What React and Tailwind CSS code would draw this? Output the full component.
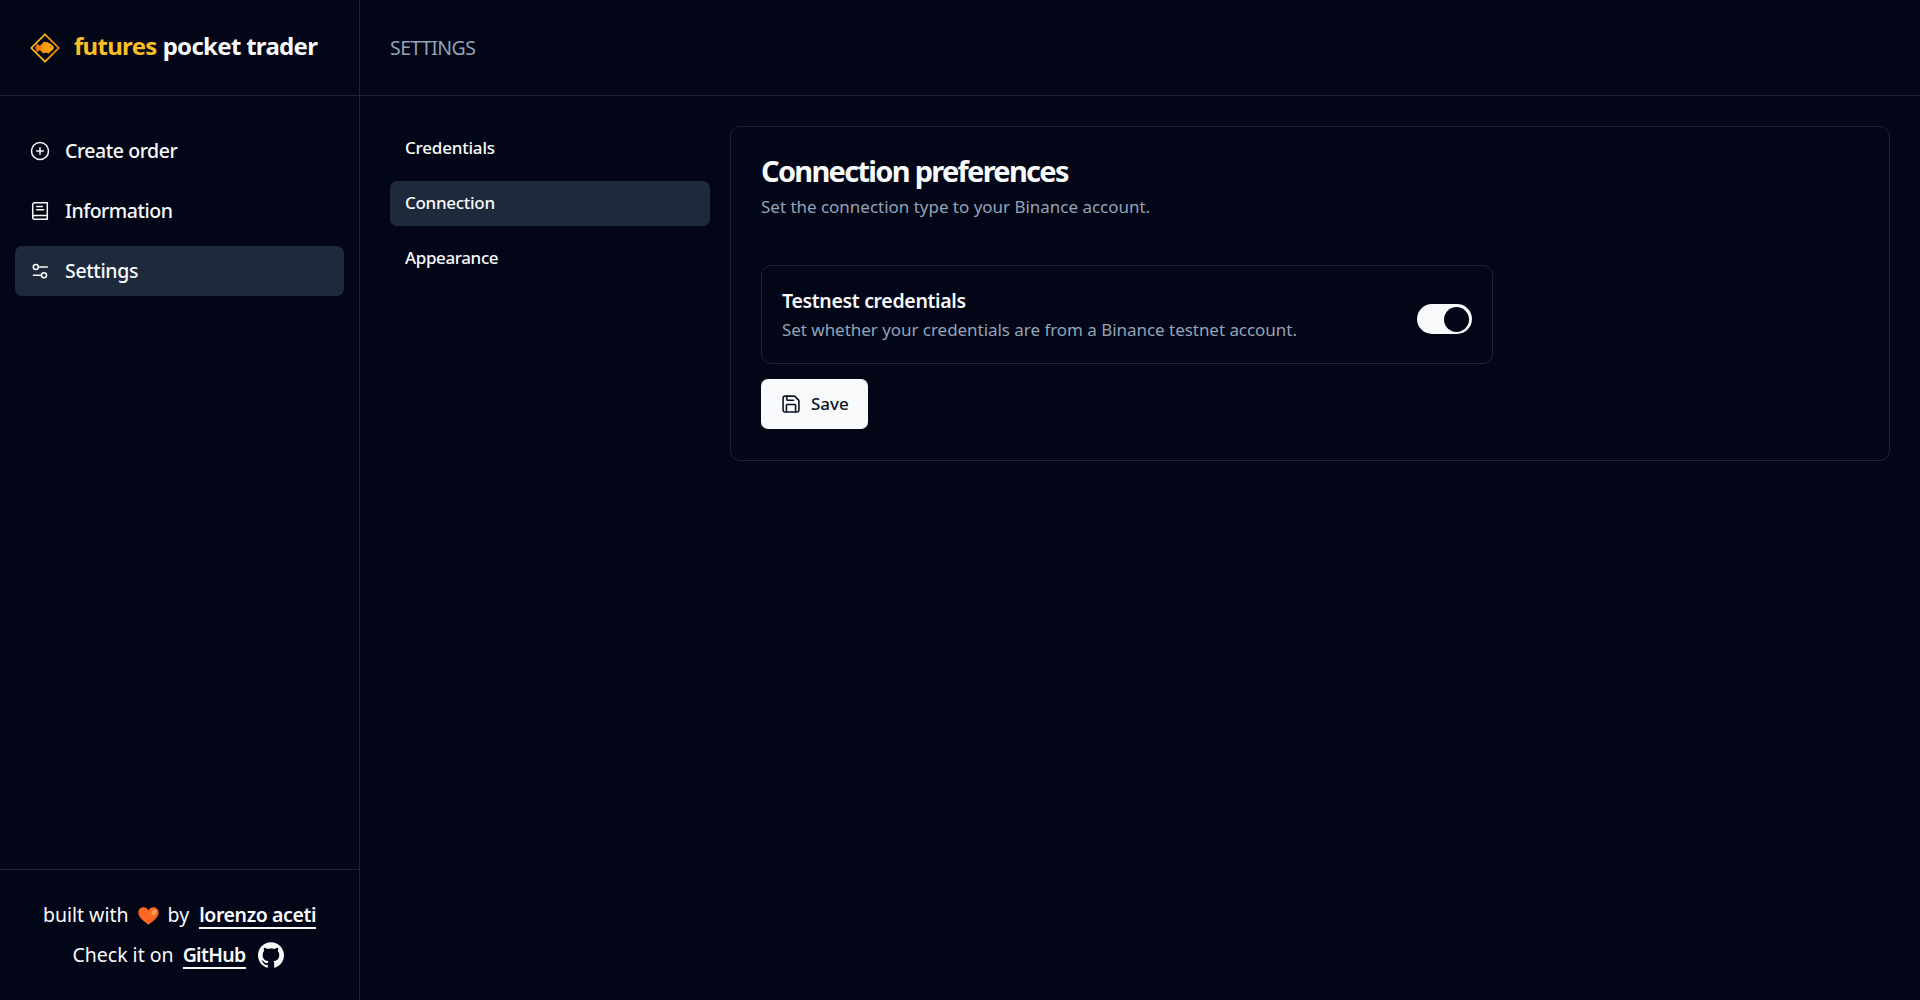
import React, { useState } from "react";
import { SiGithub } from "react-icons/si";

function Logo() {
  return (
    <svg className="size-[30px] shrink-0" viewBox="0 0 30 30" fill="none">
      <defs>
        <linearGradient id="frame" x1="0" y1="15" x2="30" y2="15" gradientUnits="userSpaceOnUse">
          <stop stopColor="#fcc60a" />
          <stop offset="1" stopColor="#f08a0c" />
        </linearGradient>
        <linearGradient id="fish" x1="6" y1="15" x2="24" y2="15" gradientUnits="userSpaceOnUse">
          <stop stopColor="#f26a12" />
          <stop offset="0.45" stopColor="#fb9a0c" />
          <stop offset="1" stopColor="#fdae08" />
        </linearGradient>
      </defs>
      <path d="M15 1.3 28.7 15 15 28.7 1.3 15Z" stroke="url(#frame)" strokeWidth="1.7" />
      <path
        d="M6 10.8c1.8.2 3.200 1 4 2.200 1-1.300 1.800-2 2.600-2.400l.2-1.200c2.200-.7 4.700-.5 6.400.9 2.200.9 3.900 2.500 4.900 4.500-.9 1.900-2.400 3.300-4.300 4.200l-1 1.600-2-.9-2.300.1-1.300 1-.9-1.600c-1-.5-1.800-1.200-2.500-2.100-.9 1.100-2 1.800-3.600 2 .3-1.400.2-2.300-.6-3l-.9-1.300 1.100-1c.700-.9.800-1.800.2-3Z"
        fill="url(#fish)"
      />
      <circle cx="20.500" cy="13.800" r="0.700" fill="#7a3a05" />
    </svg>
  );
}

function Heart() {
  return (
    <svg className="h-[18px] w-[21px]" viewBox="0 0 21 18">
      <path d="M10.500 17.800C7 15 .4 10.800.4 5.600.4 2.500 2.700.3 5.500.3c2.100 0 4 1.100 5 3 1-1.900 2.900-3 5-3 2.800 0 5.100 2.200 5.100 5.300 0 5.200-6.600 9.400-10.100 12.200Z" fill="#ff6723" />
      <path d="M2.600 9.600C3.800 13 7.600 15.400 10.500 17.800 7 15 .4 10.800.4 5.600.4 3.800 1.200 2.200 2.400 1.300 1.200 4 1.500 6.900 2.600 9.600Z" fill="#e2501c" />
      <ellipse cx="16" cy="5.400" rx="2.100" ry="3.300" transform="rotate(28 16 5.400)" fill="#ffa05c" />
    </svg>
  );
}

const stroke = { fill: "none", stroke: "currentColor", strokeWidth: 1.5, strokeLinecap: "round", strokeLinejoin: "round" };

function PlusCircle() {
  return (
    <svg className="size-5" viewBox="0 0 20 20" {...stroke}>
      <circle cx="10" cy="10" r="8.500" />
      <path d="M6.700 10h6.600M10 6.700v6.600" />
    </svg>
  );
}

function Book() {
  return (
    <svg className="size-5" viewBox="0 0 20 20" {...stroke}>
      <path d="M17.300 14.400V1.700H4.700a2 2 0 0 0-2 2v12.600a2 2 0 0 0 2 2h12.600v-3.900H4.700a2 2 0 0 0-2 1.900" />
      <path d="M6.700 5.600h5.700M6.700 8.700h7" />
    </svg>
  );
}

function Sliders() {
  return (
    <svg className="size-5" viewBox="0 0 20 20" {...stroke}>
      <circle cx="5.800" cy="5.900" r="2.500" />
      <path d="M8.500 5.900h8.800M11.500 14.200H3.400" />
      <circle cx="14" cy="14.200" r="2.500" />
    </svg>
  );
}

function Floppy() {
  return (
    <svg className="size-5" viewBox="0 0 24 24" fill="none" stroke="currentColor" strokeWidth="1.900" strokeLinecap="round" strokeLinejoin="round">
      <path d="M15.500 2.500a2 2 0 0 1 1.400.6l4 4a2 2 0 0 1 .6 1.400V19.500a2 2 0 0 1-2 2h-15a2 2 0 0 1-2-2v-15a2 2 0 0 1 2-2z" />
      <path d="M17.500 21.500v-8a1 1 0 0 0-1-1h-9a1 1 0 0 0-1 1v8M7 2.500v4a1 1 0 0 0 1 1h7" />
    </svg>
  );
}

const mainLinks = [
  { label: "Create order", icon: PlusCircle, tracking: "tracking-[-0.45px]" },
  { label: "Information", icon: Book, tracking: "tracking-[-0.48px]" },
  { label: "Settings", icon: Sliders, tracking: "tracking-[-0.35px]" },
];

const tabs = [
  { label: "Credentials", tracking: "tracking-[-0.2px]" },
  { label: "Connection", tracking: "tracking-[-0.3px]" },
  { label: "Appearance", tracking: "tracking-[-0.38px]" },
];

export default function App() {
  const [page, setPage] = useState("Settings");
  const [tab, setTab] = useState("Connection");
  const [testnet, setTestnet] = useState(true);

  return (
    <div className="flex h-screen overflow-hidden bg-[#020617] font-['Noto_Sans',sans-serif] text-[#f8fafc]">
      <aside className="flex w-[360px] shrink-0 flex-col border-r border-[#1e2435]">
        <div className="flex h-24 shrink-0 items-center border-b border-[#1e2435] pl-[30px]">
          <Logo />
          <h1 className="-mt-[4px] ml-[14px] flex gap-[6px] text-[24px] font-bold whitespace-nowrap">
            <span className="tracking-[-0.7px] text-[#fbbf24]">futures</span>
            <span className="tracking-[-0.7px]">pocket trader</span>
          </h1>
        </div>
        <nav className="flex flex-1 flex-col gap-[10px] py-[30px] pr-[15px] pl-[15px]">
          {mainLinks.map(({ label, icon: Icon, tracking }) => (
            <button
              key={label}
              onClick={() => setPage(label)}
              className={`flex h-[50px] items-center gap-[15px] rounded-[7px] pl-[15px] text-left ${page === label ? "bg-[#1e293b]" : ""}`}
            >
              <Icon />
              <span className={`text-[19.5px] font-medium ${tracking}`}>{label}</span>
            </button>
          ))}
        </nav>
        <footer className="flex h-[131px] shrink-0 flex-col items-center border-t border-[#1e2435] pt-[30px] text-[19.5px]">
          <div className="flex h-[30px] items-start">
            <span className="leading-[30px]">built with</span>
            <span className="mr-[9px] ml-[9px] mt-[7px]"><Heart /></span>
            <span className="leading-[30px]">by</span>
            <span className="ml-[10px] h-[29px] border-b-2 border-[#f8fafc] leading-[30px] font-semibold tracking-[-0.39px]">lorenzo aceti</span>
          </div>
          <div className="mt-[10px] flex h-[30px] items-start pr-[3px]">
            <span className="leading-[30px]">Check it on</span>
            <span className="ml-[9px] h-[29px] border-b-2 border-[#f8fafc] leading-[30px] font-semibold tracking-[-0.67px]">GitHub</span>
            <SiGithub className="mt-[2px] ml-[12px] size-[26px]" />
          </div>
        </footer>
      </aside>

      <div className="flex min-w-0 flex-1 flex-col">
        <header className="flex h-24 shrink-0 items-center border-b border-[#1e2435] pl-[30px]">
          <span className="text-[19.5px] tracking-[-0.58px] text-[#94a3b8]">SETTINGS</span>
        </header>
        <main className="flex items-start gap-5 p-[30px]">
          <nav className="flex w-80 shrink-0 flex-col gap-[10px]">
            {tabs.map(({ label, tracking }) => (
              <button
                key={label}
                onClick={() => setTab(label)}
                className={`flex h-[45px] items-center rounded-[7px] px-[15px] pb-[2px] text-left text-[17px] font-medium ${tracking} ${tab === label ? "bg-[#1e293b]" : ""}`}
              >
                {label}
              </button>
            ))}
          </nav>
          <section className="h-[335px] flex-1 rounded-[10px] border border-[#1e2435] px-[30px] pt-[29px]">
            <h2 className="text-[29px] leading-[30px] font-bold tracking-[-1.71px] whitespace-nowrap">Connection preferences</h2>
            <p className="mt-[8px] text-[17px] leading-[25px] tracking-[-0.02px] text-[#94a3b8]">Set the connection type to your Binance account.</p>
            <div className="mt-[46px] flex h-[99px] w-[732px] justify-between rounded-[10px] border border-[#1e2435] px-5">
              <div className="pt-[20px]">
                <h3 className="text-[19.5px] leading-[30px] font-semibold tracking-[-0.33px]">Testnest credentials</h3>
                <p className="mt-px text-[17px] leading-[25px] tracking-[-0.04px] text-[#94a3b8]">Set whether your credentials are from a Binance testnet account.</p>
              </div>
              <button
                role="switch"
                aria-checked={testnet}
                aria-label="Testnest credentials"
                onClick={() => setTestnet(!testnet)}
                className={`mt-[38px] flex h-[30px] w-[55px] items-center rounded-full px-[3px] ${testnet ? "justify-end bg-[#f8fafc]" : "justify-start bg-[#1e293b]"}`}
              >
                <span className="size-[25px] rounded-full bg-[#020617]" />
              </button>
            </div>
            <button className="mt-[15px] flex h-[50px] w-[107px] items-center gap-[10px] rounded-[7px] bg-[#f8fafc] pl-5 text-[17px] font-medium text-[#0b1222]">
              <Floppy />
              <span>Save</span>
            </button>
          </section>
        </main>
      </div>
    </div>
  );
}
